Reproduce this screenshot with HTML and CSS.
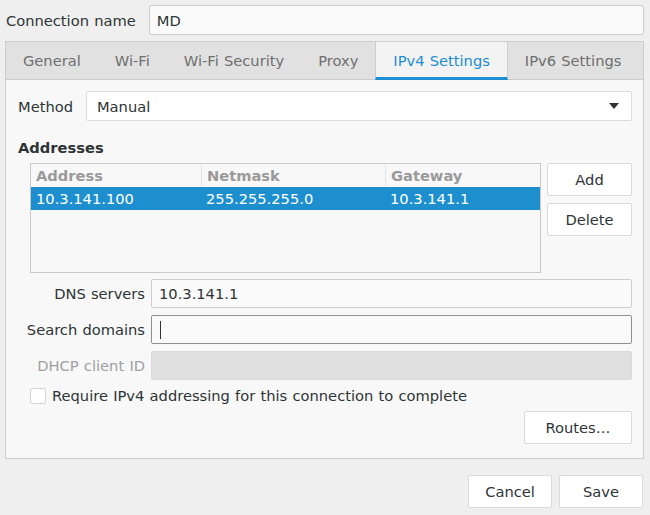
FILE: index.html
```html
<!DOCTYPE html>
<html>
<head>
<meta charset="utf-8">
<link rel="stylesheet" href="styles.css">
</head>
<body>
<div class="window">
  <div class="name-row">
    <span class="label">Connection name</span>
    <div class="entry name-entry">MD</div>
  </div>
  <div class="notebook">
    <div class="tabs">
      <div class="tab">General</div>
      <div class="tab">Wi-Fi</div>
      <div class="tab">Wi-Fi Security</div>
      <div class="tab">Proxy</div>
      <div class="tab active">IPv4 Settings</div>
      <div class="tab">IPv6 Settings</div>
    </div>
    <div class="page">
      <div class="method-row">
        <span class="label">Method</span>
        <div class="combo">
          <span>Manual</span>
          <svg class="arrow" width="10" height="6" viewBox="0 0 10 6"><path d="M0 0 L10 0 L5 6 Z" fill="#333"/></svg>
        </div>
      </div>
      <div class="section-title">Addresses</div>
      <div class="addr-row">
        <div class="table">
          <div class="thead">
            <div class="c1">Address</div>
            <div class="c2">Netmask</div>
            <div class="c3">Gateway</div>
          </div>
          <div class="trow selected">
            <div class="c1">10.3.141.100</div>
            <div class="c2">255.255.255.0</div>
            <div class="c3">10.3.141.1</div>
          </div>
        </div>
        <div class="side-buttons">
          <div class="button">Add</div>
          <div class="button">Delete</div>
        </div>
      </div>
      <div class="form">
        <span class="flabel">DNS servers</span>
        <div class="entry">10.3.141.1</div>
        <span class="flabel">Search domains</span>
        <div class="entry focused"><span class="cursor"></span></div>
        <span class="flabel disabled">DHCP client ID</span>
        <div class="entry disabled-entry"></div>
      </div>
      <div class="check-row">
        <span class="checkbox"></span>
        <span class="label">Require IPv4 addressing for this connection to complete</span>
      </div>
      <div class="routes-row">
        <div class="button routes">Routes…</div>
      </div>
    </div>
  </div>
  <div class="actions">
    <div class="button action">Cancel</div>
    <div class="button action">Save</div>
  </div>
</div>
</body>
</html>
```
FILE: styles.css
```css
html, body {
  margin: 0;
  padding: 0;
  background: #efefef;
}
body {
  font-family: "DejaVu Sans", sans-serif;
  font-size: 14.67px;
  word-spacing: 0.6px;
  color: #2e3436;
  width: 650px;
  height: 515px;
  overflow: hidden;
}
.window {
  padding: 5px 6px 0 5px;
}
.name-row {
  display: flex;
  align-items: center;
  gap: 13px;
  padding-left: 1px;
  height: 30px;
}
.label {
  white-space: nowrap;
}
.entry {
  box-sizing: border-box;
  height: 29px;
  border: 1px solid #cdcdcd;
  border-radius: 2px;
  background: #fafafa;
  display: flex;
  align-items: center;
  padding-left: 7px;
}
.name-entry {
  flex: 1;
  height: 30px;
}
.notebook {
  margin-top: 6px;
  border: 1px solid #cdcdcd;
  background: #f8f8f8;
  height: 418px;
  box-sizing: border-box;
  display: flex;
  flex-direction: column;
}
.tabs {
  display: flex;
  height: 37px;
  background: #e1e1e1;
  border-bottom: 1px solid #cdcdcd;
}
.tab {
  padding: 0 17px;
  display: flex;
  align-items: center;
  color: #6f6f6f;
  box-sizing: border-box;
  white-space: nowrap;
}
.tab.active {
  background: #f3f3f3;
  color: #1e8ed0;
  border-left: 1px solid #cdcdcd;
  border-right: 1px solid #cdcdcd;
  border-bottom: 3px solid #1d8ed1;
  padding-top: 2px;
  margin-bottom: -1px;
}
.page {
  padding: 11px 11px 0 12px;
  display: flex;
  flex-direction: column;
}
.method-row {
  display: flex;
  align-items: center;
  gap: 13px;
  height: 30px;
}
.combo {
  flex: 1;
  box-sizing: border-box;
  height: 30px;
  border: 1px solid #dcdcdc;
  border-radius: 2px;
  background: #ffffff;
  display: flex;
  align-items: center;
  justify-content: space-between;
  padding: 0 12px 0 10px;
}
.section-title {
  font-weight: bold;
  margin-top: 17px;
  line-height: 20px;
}
.addr-row {
  display: flex;
  gap: 6px;
  margin-top: 5px;
  padding-left: 12px;
}
.table {
  box-sizing: border-box;
  width: 511px;
  height: 110px;
  border: 1px solid #c9c9c9;
  background: #f8f8f8;
}
.thead, .trow {
  display: flex;
  height: 23px;
  align-items: center;
}
.thead {
  color: #9a9a9a;
  font-weight: bold;
}
.thead > div {
  height: 100%;
  display: flex;
  align-items: center;
  border-left: 1px solid #e4e4e4;
  box-sizing: border-box;
}
.thead > .c1 { border-left: none; }
.c1 { width: 170px; padding-left: 5px; box-sizing: border-box; white-space: nowrap; }
.c2 { width: 184px; padding-left: 5px; box-sizing: border-box; white-space: nowrap; }
.c3 { flex: 1; padding-left: 5px; box-sizing: border-box; white-space: nowrap; }
.trow.selected {
  background: #1d8fcf;
  color: #ffffff;
}
.side-buttons {
  display: flex;
  flex-direction: column;
  gap: 7px;
}
.button {
  box-sizing: border-box;
  height: 33px;
  width: 85px;
  border: 1px solid #dadada;
  border-radius: 2px;
  background: #ffffff;
  display: flex;
  align-items: center;
  justify-content: center;
  white-space: nowrap;
}
.form {
  display: grid;
  grid-template-columns: 115px 1fr;
  column-gap: 6px;
  row-gap: 7px;
  margin-top: 6px;
  padding-left: 12px;
  align-items: center;
}
.flabel {
  white-space: nowrap;
  justify-self: end;
}
.flabel.disabled {
  color: #a0a0a0;
}
.entry.focused {
  border-color: #8f8f8f;
  background: #fafafa;
}
.cursor {
  width: 1px;
  height: 18px;
  background: #2e3436;
  margin-left: 1px;
}
.disabled-entry {
  background: #e0e0e0;
  border-color: #dadada;
}
.check-row {
  display: flex;
  align-items: center;
  gap: 6px;
  margin-top: 7px;
  padding-left: 12px;
  height: 17px;
}
.checkbox {
  box-sizing: border-box;
  width: 16px;
  height: 16px;
  border: 1px solid #d4d4d4;
  border-radius: 2px;
  background: #ffffff;
}
.routes-row {
  display: flex;
  justify-content: flex-end;
  margin-top: 7px;
}
.routes {
  width: 108px;
}
.actions {
  display: flex;
  justify-content: flex-end;
  gap: 7px;
  margin-top: 16px;
  padding-right: 1px;
}
.action {
  width: 84px;
}
```
